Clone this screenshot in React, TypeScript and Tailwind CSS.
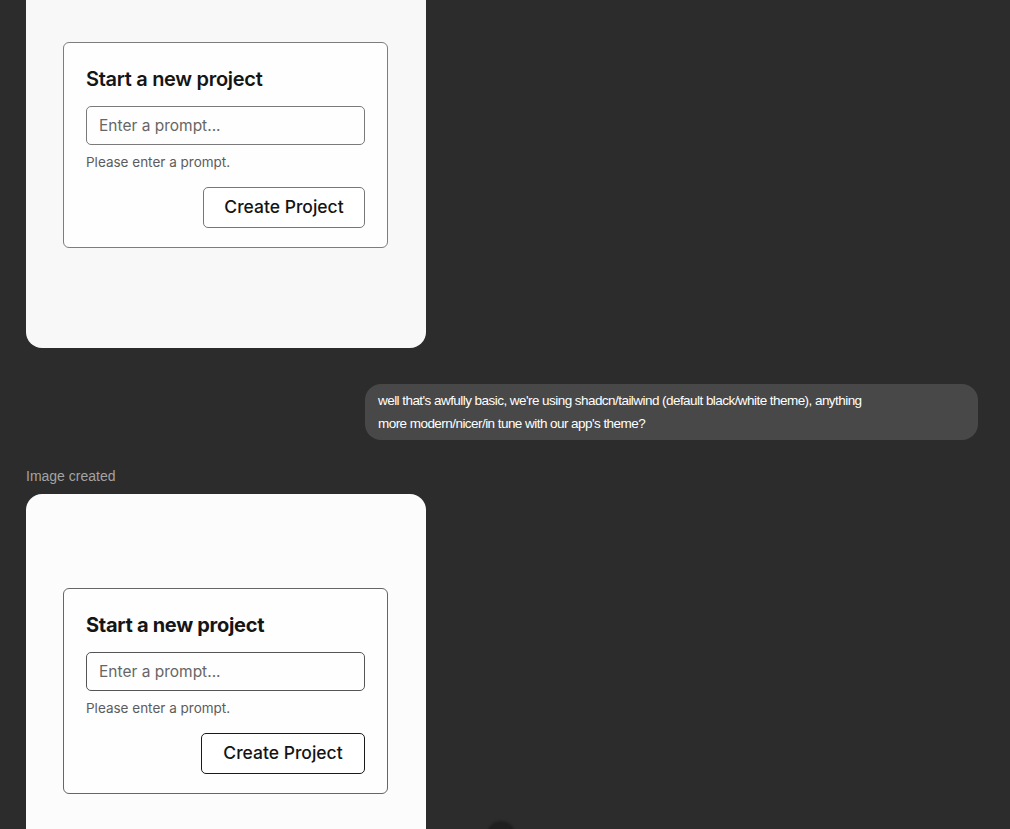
const ui = "font-['Inter',sans-serif]";

function ProjectCard({ strong }: { strong?: boolean }) {
  return (
    <div
      className={`w-[325px] rounded-[6px] border bg-[#fefefe] px-[22px] pt-[22px] pb-[19px] ${ui} ${
        strong ? 'border-[#666]' : 'border-[#7d7d7d]'
      }`}
    >
      <h3
        className={`text-[20px] leading-[28px] text-[#151515] tracking-[-0.3px] ${
          strong ? 'font-bold' : 'font-semibold'
        }`}
      >
        Start a new project
      </h3>
      <div
        className={`mt-[13px] h-[39px] rounded-[5px] border ${
          strong ? 'border-[#555]' : 'border-[#7a7a7a]'
        } flex items-center px-[12px] text-[15.5px] text-[#666]`}
      >
        Enter a prompt...
      </div>
      <p className="mt-[8px] text-[13.5px] leading-[18px] text-[#5c5c5c]">Please enter a prompt.</p>
      <div className="mt-[16px] flex justify-end">
        <button
          className={`h-[41px] rounded-[5px] bg-white text-[17.5px] font-medium text-[#141414] ${
            strong ? 'w-[164px] border-[1.5px] border-[#1a1a1a]' : 'w-[162px] border border-[#777]'
          }`}
        >
          Create Project
        </button>
      </div>
    </div>
  );
}

export default function App() {
  return (
    <div className="relative w-[1010px] h-[829px] overflow-hidden bg-[#2c2c2c] pl-[26px] pr-[32px] font-['Liberation_Sans',sans-serif]">
      <div className="w-[400px] h-[348px] rounded-b-[16px] bg-[#f8f8f8] pt-[42px] pl-[37px]">
        <ProjectCard />
      </div>

      <div className="mt-[36px] flex justify-end">
        <div className="w-[613px] rounded-[16px] bg-[#484848] px-[13px] py-[5px] text-[13.5px] leading-[23px] text-white tracking-[-0.55px]">
          well that's awfully basic, we're using shadcn/tailwind (default black/white theme), anything
          <br />
          more modern/nicer/in tune with our app's theme?
        </div>
      </div>

      <div className="mt-[27px] text-[14px] leading-[18px] text-[#a3a3a3]">Image created</div>

      <div className="mt-[9px] w-[400px] h-[360px] rounded-t-[16px] bg-[#fcfcfc] pt-[94px] pl-[37px]">
        <ProjectCard strong />
      </div>

      <div className="absolute left-[487px] top-[821px] w-[28px] h-[28px] rounded-full bg-[#1f1f1f] blur-[1px]" />
    </div>
  );
}
